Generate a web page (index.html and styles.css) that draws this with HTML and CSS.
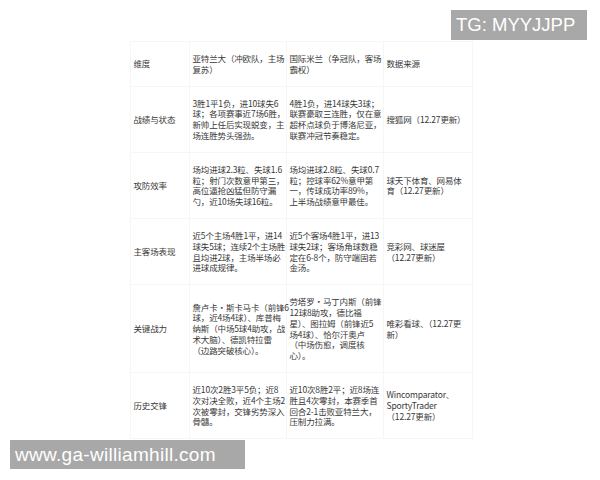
FILE: index.html
```html
<!DOCTYPE html>
<html lang="zh-CN">
<head>
<meta charset="utf-8">
<title>亚特兰大 vs 国际米兰</title>
<link rel="stylesheet" href="styles.css">
</head>
<body>
<div class="page">
  <table class="compare">
    <colgroup>
      <col class="c1"><col class="c2"><col class="c3"><col class="c4">
    </colgroup>
    <tr>
      <td>维度</td>
      <td>亚特兰大（冲欧队，主场<br>复苏）</td>
      <td>国际米兰（争冠队，客场<br>霸权）</td>
      <td>数据来源</td>
    </tr>
    <tr>
      <td>战绩与状态</td>
      <td>3胜1平1负，进10球失6<br>球；各项赛事近7场6胜，<br>新帅上任后实现蜕变，主<br>场连胜势头强劲。</td>
      <td>4胜1负，进14球失3球；<br>联赛豪取三连胜，仅在意<br>超杯点球负于博洛尼亚，<br>联赛冲冠节奏稳定。</td>
      <td>搜狐网（12.27更新）</td>
    </tr>
    <tr>
      <td>攻防效率</td>
      <td>场均进球2.3粒、失球1.6<br>粒；射门次数意甲第三，<br>高位逼抢凶猛但防守漏<br>勺，近10场失球16粒。</td>
      <td>场均进球2.8粒、失球0.7<br>粒；控球率62%意甲第<br>一，传球成功率89%，<br>上半场战绩意甲最佳。</td>
      <td>球天下体育、网易体<br>育（12.27更新）</td>
    </tr>
    <tr>
      <td>主客场表现</td>
      <td>近5个主场4胜1平，进14<br>球失5球；连续2个主场胜<br>且均进2球，主场半场必<br>进球成规律。</td>
      <td>近5个客场4胜1平，进13<br>球失2球；客场角球数稳<br>定在6-8个，防守端固若<br>金汤。</td>
      <td>竞彩网、球迷屋<br>（12.27更新）</td>
    </tr>
    <tr>
      <td>关键战力</td>
      <td>詹卢卡·斯卡马卡（前锋6<br>球，近4场4球）、库普梅<br>纳斯（中场5球4助攻，战<br>术大脑）、德凯特拉雷<br>（边路突破核心）。</td>
      <td>劳塔罗·马丁内斯（前锋<br>12球8助攻，德比福<br>星）、图拉姆（前锋近5<br>场4球）、恰尔汗奥卢<br>（中场伤愈，调度核<br>心）。</td>
      <td>唯彩看球、（12.27更<br>新）</td>
    </tr>
    <tr>
      <td>历史交锋</td>
      <td>近10次2胜3平5负；近8<br>次对决全败，近4个主场2<br>次被零封，交锋劣势深入<br>骨髓。</td>
      <td>近10次8胜2平；近8场连<br>胜且4次零封，本赛季首<br>回合2-1击败亚特兰大，<br>压制力拉满。</td>
      <td>Wincomparator、<br>SportyTrader<br>（12.27更新）</td>
    </tr>
  </table>
  <div class="mark mark-top">TG: MYYJJPP</div>
  <div class="mark mark-bottom">www.ga-williamhill.com</div>
</div>
</body>
</html>
```
FILE: styles.css
```css
html, body {
  margin: 0;
  padding: 0;
  background: #ffffff;
}

.page {
  position: relative;
  width: 600px;
  height: 480px;
  overflow: hidden;
  padding: 41px 0 0 130px;
  box-sizing: border-box;
}

.compare {
  border-collapse: collapse;
  table-layout: fixed;
  width: 342px;
  font-family: "Noto Sans CJK SC", "Noto Sans", sans-serif;
  font-size: 8.5px;
  line-height: 10.8px;
  letter-spacing: -0.15px;
  color: #383838;
}

.compare .c1 { width: 59px; }
.compare .c2 { width: 97px; }
.compare .c3 { width: 97px; }
.compare .c4 { width: 89px; }

.compare td {
  border: 1px solid #f6f6f6;
  padding: 11px 1px 11px 2.5px;
  vertical-align: middle;
  white-space: nowrap;
}

.mark {
  position: absolute;
  background: #a8a8a8;
  color: #ffffff;
  font-family: "Liberation Sans", Arial, sans-serif;
  font-size: 18.5px;
  line-height: 30px;
  height: 30px;
  box-sizing: border-box;
}

.mark-top {
  top: 10px;
  left: 451px;
  width: 136px;
  padding-left: 5px;
}

.mark-bottom {
  top: 440px;
  left: 10px;
  width: 235px;
  height: 29px;
  line-height: 29px;
  padding-left: 5px;
  font-size: 19px;
  letter-spacing: 0.3px;
}
```
